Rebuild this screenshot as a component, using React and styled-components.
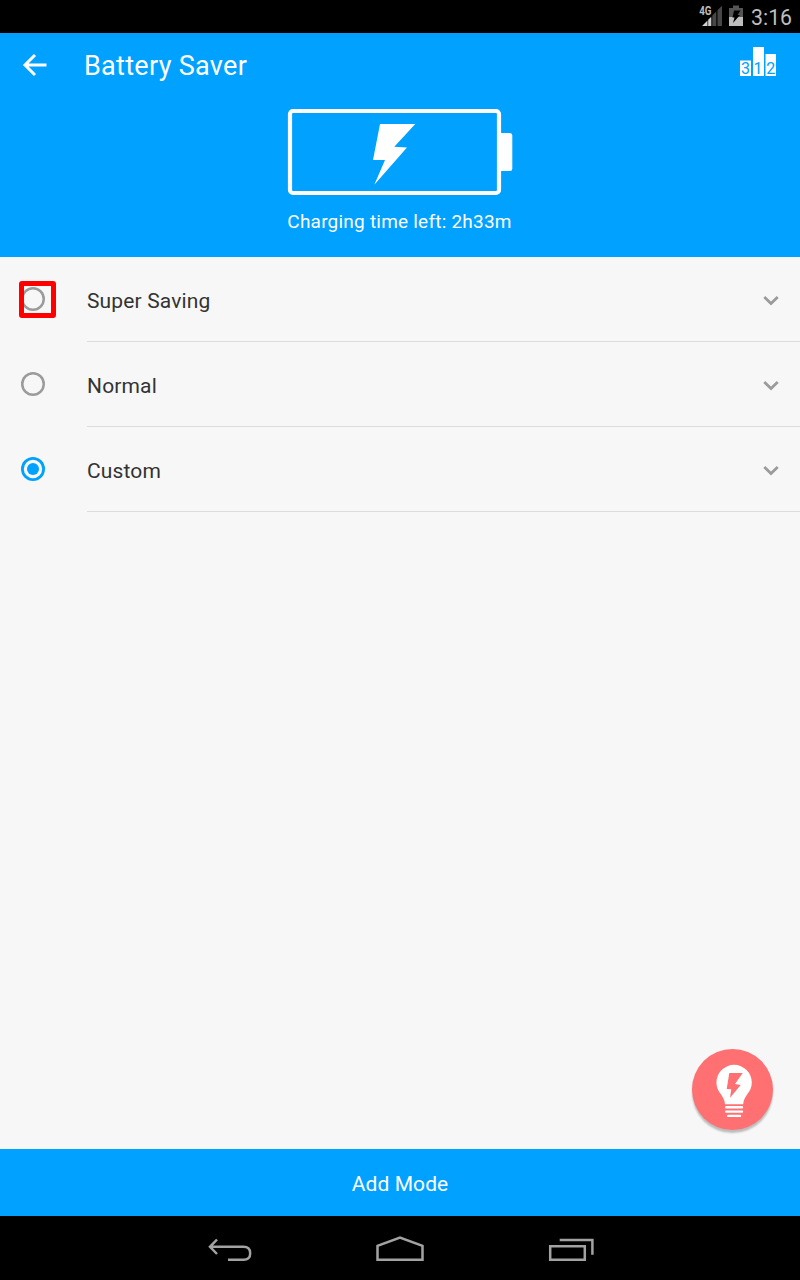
import React from 'react';
import styled, { createGlobalStyle } from 'styled-components';

const Global = createGlobalStyle`
  * { box-sizing: border-box; }
  body { margin: 0; background: #f7f7f7; }
`;

const Screen = styled.div`
  width: 800px;
  height: 1280px;
  display: flex;
  flex-direction: column;
  position: relative;
  overflow: hidden;
  background: #f7f7f7;
  font-family: Roboto, "Liberation Sans", sans-serif;
`;

const Icon = styled.svg`
  display: block;
  flex: none;
  overflow: visible;
`;

const StatusBar = styled.div`
  height: 33px;
  flex: none;
  display: flex;
  justify-content: flex-end;
  background: #000;
  padding-right: 8px;
`;

const Clock = styled.div`
  margin-left: 7px;
  width: 41px;
  color: #bebebe;
  font-size: 21.3px;
  line-height: 35px;
  white-space: nowrap;
`;

const Header = styled.header`
  height: 224px;
  flex: none;
  display: flex;
  flex-direction: column;
  align-items: center;
  background: #00a1ff;
  color: #fff;
`;

const Toolbar = styled.div`
  width: 100%;
  height: 66px;
  flex: none;
  display: flex;
  align-items: center;
  padding: 0 23px 2px 23px;
`;

const Title = styled.h1`
  flex: 1;
  margin: 2px 0 0 37px;
  font-size: 27px;
  font-weight: 400;
  letter-spacing: 0.3px;
  line-height: 32px;
`;

const PodiumIcon = styled(Icon)`
  margin-bottom: 6px;
`;

const ChargeText = styled.div`
  margin: 15px 1px 0 0;
  font-size: 19px;
  line-height: 24px;
  letter-spacing: 0.22px;
  white-space: nowrap;
`;

const BatteryIcon = styled(Icon)`
  margin-top: 10px;
`;

const ModeList = styled.main`
  flex: 1;
`;

const Row = styled.div`
  height: 85px;
  display: flex;
  padding-left: 21px;
`;

const Radio = styled.div`
  width: 24px;
  height: 24px;
  flex: none;
  margin: 30px 42px 0 0;
  display: flex;
  align-items: center;
  justify-content: center;
  border-radius: 50%;
  box-shadow: inset 0 0 0 ${(p) => (p.$on ? '2.8px #00a1ff' : '2.5px #9b9b9b')};
  position: relative;
`;

const Dot = styled.span`
  width: 12.4px;
  height: 12.4px;
  border-radius: 50%;
  background: #00a1ff;
`;

const FocusFrame = styled.span`
  position: absolute;
  left: -2px;
  top: -6px;
  width: 37px;
  height: 37px;
  border: 5px solid #f00;
  border-radius: 3px;
`;

const RowBody = styled.div`
  flex: 1;
  display: flex;
  align-items: center;
  justify-content: space-between;
  border-bottom: 1px solid #dcdcdc;
  padding: 3px 21px 0 0;
  color: #333;
  font-size: 21px;
  letter-spacing: 0.15px;
`;

const Fab = styled.button`
  position: absolute;
  left: 692px;
  top: 1049px;
  width: 81px;
  height: 81px;
  padding: 0;
  border: 0;
  border-radius: 50%;
  background: #ff7073;
  box-shadow: 0 3px 2px rgba(0, 0, 0, 0.24);
`;

const AddButton = styled.button`
  height: 67px;
  flex: none;
  border: 0;
  padding: 3px 0 0;
  background: #00a1ff;
  color: #fff;
  font-family: inherit;
  font-size: 21px;
  letter-spacing: 0.1px;
`;

const NavBar = styled.nav`
  height: 64px;
  flex: none;
  display: flex;
  gap: 125px;
  padding-left: 209px;
  background: #000;
`;

const NavIcon = styled(Icon)`
  fill: none;
  stroke: #a2a2a2;
  stroke-width: 2.5;
`;

const modes = [
  { name: 'Super Saving', focused: true },
  { name: 'Normal' },
  { name: 'Custom', on: true },
];

export default function App() {
  return (
    <Screen>
      <Global />
      <StatusBar>
        <Icon width="48" height="33" viewBox="696 0 48 33">
          <path d="M702 26L707.5 20.5V26Z M708.2 26V19.8L711.3 16.7V26Z" fill="#d0d0d0" />
          <path d="M712.3 26V15.5L716.3 11.5V26Z M717.5 26V10.3L722 5.8V26Z" fill="#474747" />
          <text x="699.2" y="15" fontSize="12" fontWeight="700" fill="#bdbdbd" textLength="12.3" lengthAdjust="spacingAndGlyphs">4G</text>
          <path d="M729 17V8H733V5.5H739V8H743V17Z" fill="#555" />
          <path d="M729 17H743V26H729Z" fill="#bebebe" />
          <path d="M734 10.5H740.5L737.5 15H740L733 23L734.5 17.5H732.5Z" fill="#000" />
        </Icon>
        <Clock>3:16</Clock>
      </StatusBar>
      <Header>
        <Toolbar>
          <Icon width="24" height="24" viewBox="23 53 24 24">
            <path d="M46.5 65H25M35 55L25 65L35 75" fill="none" stroke="#fff" strokeWidth="3" />
          </Icon>
          <Title>Battery Saver</Title>
          <PodiumIcon width="37" height="32" viewBox="740 46 37 32">
            <path d="M740 60.5H751V76H740Z M753 47H764V76H753Z M765.5 54H776V76H765.5Z" fill="#fff" />
            <g fill="#00a1ff" fontSize="16" textAnchor="middle">
              <text x="745.6" y="74">3</text>
              <text x="758" y="74">1</text>
              <text x="770.8" y="74">2</text>
            </g>
          </PodiumIcon>
        </Toolbar>
        <BatteryIcon width="225" height="86" viewBox="288 109 225 86">
          <rect x="290" y="111" width="209" height="82" rx="3" fill="none" stroke="#fff" strokeWidth="4.2" />
          <path d="M501 133H510Q512.3 133 512.3 135.5V168.5Q512.3 171 510 171H501Z" fill="#fff" />
          <path d="M380 124H415.3L394.3 146.8L407 147.6L374.3 184.8L385 160H373Z" fill="#fff" />
        </BatteryIcon>
        <ChargeText>Charging time left: 2h33m</ChargeText>
      </Header>
      <ModeList>
        {modes.map((m) => (
          <Row key={m.name}>
            <Radio $on={m.on}>
              {m.on && <Dot />}
              {m.focused && <FocusFrame />}
            </Radio>
            <RowBody>
              {m.name}
              <Icon width="16" height="10" viewBox="763 296 16 10">
                <path d="M764.3 297L771 303.5L777.7 297" fill="none" stroke="#9b9b9b" strokeWidth="2.8" />
              </Icon>
            </RowBody>
          </Row>
        ))}
      </ModeList>
      <AddButton>Add Mode</AddButton>
      <NavBar>
        <NavIcon width="42" height="64" viewBox="209 1216 42 64">
          <path d="M217 1239.5L210 1246.8L217 1254M210 1246.8H243.5Q250.2 1246.8 250.2 1253.2T243.5 1259.7H228" />
        </NavIcon>
        <NavIcon width="48" height="64" viewBox="376 1216 48 64">
          <path d="M377.5 1259.8V1245.8L400 1237.6L422.5 1245.8V1259.8Z" />
        </NavIcon>
        <NavIcon width="45" height="64" viewBox="549 1216 45 64">
          <path d="M550.2 1246.2H584.8V1259.8H550.2ZM559.7 1240H592.4V1254.7" />
        </NavIcon>
      </NavBar>
      <Fab aria-label="Tips">
        <Icon width="81" height="81" viewBox="692 1049 81 81">
          <path d="M725 1104.3C724.5 1095 716.4 1093 716.4 1082.5A17.7 17.7 0 0 1 751.8 1082.5C751.8 1093 743.7 1095 743.2 1104.3Z" fill="#fff" />
          <path d="M729.3 1073H742.7L735 1084L740.7 1085L730 1097.7L731.3 1089.3L726.7 1089Z" fill="#ff7073" />
          <path d="M726.2 1107.3H742M726.2 1111.6H742M728.2 1115.9H740" stroke="#fff" strokeWidth="2.4" strokeLinecap="round" />
        </Icon>
      </Fab>
    </Screen>
  );
}
